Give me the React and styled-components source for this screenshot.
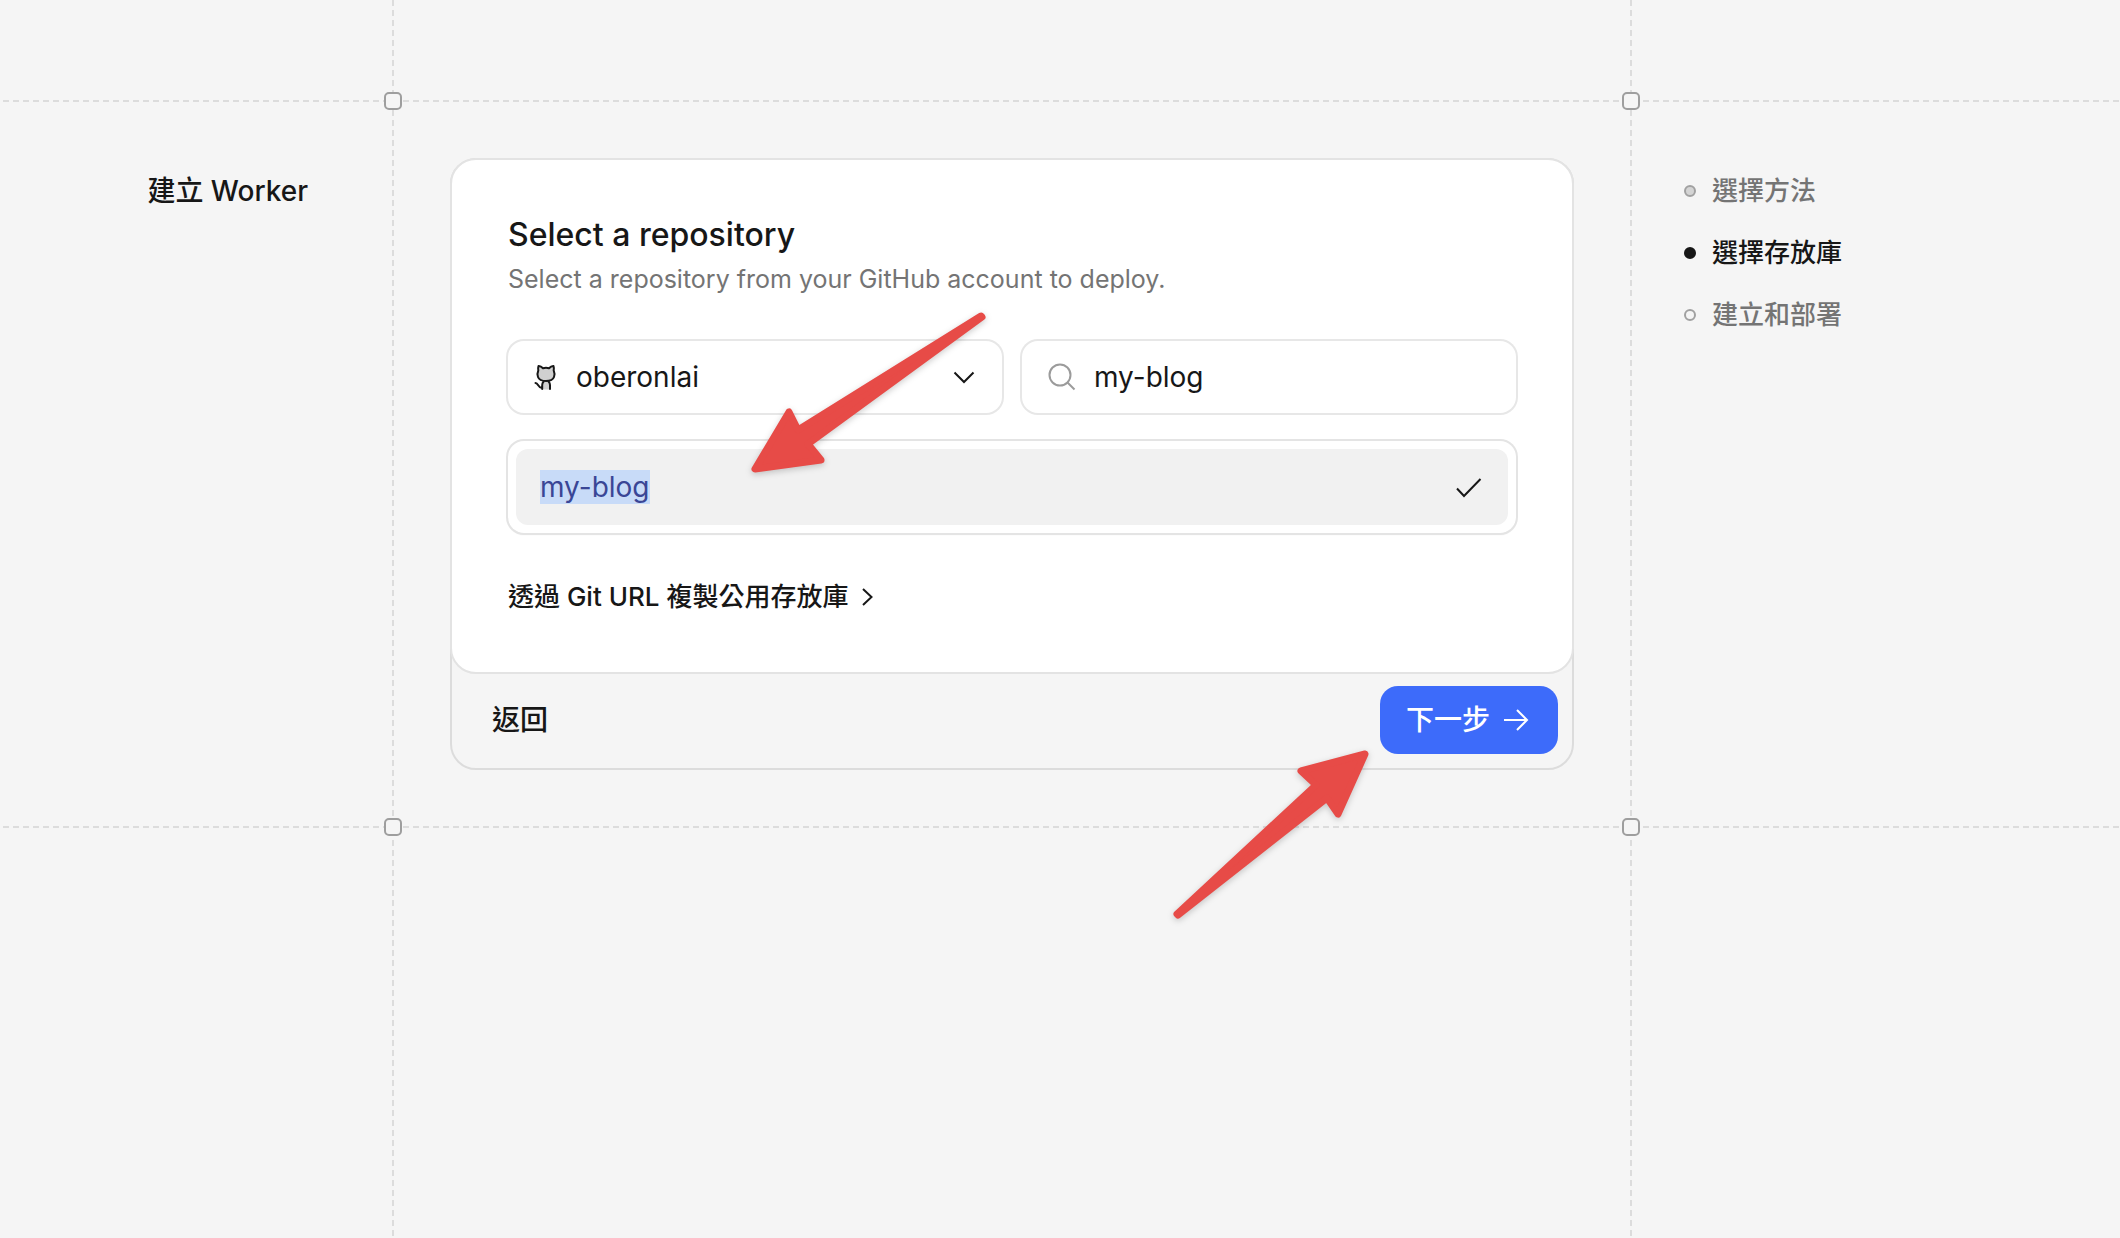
import * as React from "react"
import styled, { createGlobalStyle } from "styled-components"

const GlobalStyle = createGlobalStyle`
  * {
    box-sizing: border-box;
  }

  body {
    margin: 0;
    background-color: #f5f5f5;
    color: #171717;
    font-family: Inter, "Noto Sans CJK TC", sans-serif;
    font-size: 28px;
    line-height: 34px;
  }

  button, input, select {
    font: inherit;
    color: inherit;
  }
`

const Page = styled.div`
  position: relative;
  display: grid;
  grid-template-columns: 394px minmax(0, 1fr) 490px;
  grid-template-rows: 102px auto 1fr;
  min-height: 100vh;
  overflow: hidden;
`

const GuideColumn = styled.div`
  grid-row: 1 / -1;
  grid-column: ${({ $end }) => ($end ? 3 : 1)};
  justify-self: ${({ $end }) => ($end ? "start" : "end")};
  width: 2px;
  background: repeating-linear-gradient(to bottom, #dcdcdc 0 6px, transparent 6px 10px);
`

const GuideRow = styled.div`
  position: relative;
  grid-column: 1 / -1;
  grid-row: ${({ $end }) => ($end ? 3 : 1)};
  align-self: ${({ $end }) => ($end ? "start" : "end")};
  height: 2px;
  background: repeating-linear-gradient(to right, #dcdcdc 0 6px, transparent 6px 10px) 3px 0;
`

const Handle = styled.span`
  position: absolute;
  top: -8px;
  ${({ $side }) => ($side === "left" ? "left: 384px" : "right: 480px")};
  width: 18px;
  height: 18px;
  border: 2px solid #9e9e9e;
  border-radius: 5px;
  background-color: #f5f5f5;
`

const Aside = styled.aside`
  grid-row: 2;
  grid-column: 1;
  padding: 70px 86px;
  text-align: right;
`

const PageTitle = styled.h1`
  margin: 0;
  font-size: 28px;
  font-weight: 500;
  line-height: 38px;
`

const Main = styled.main`
  grid-row: 2;
  grid-column: 2;
  padding: 56px;
`

const Panel = styled.form`
  border: 2px solid #dcdcdc;
  border-radius: 26px;
`

const Card = styled.section`
  margin: -2px;
  padding: 56px;
  border: 2px solid #e3e3e3;
  border-radius: 26px;
  background-color: #fff;
`

const Title = styled.h2`
  margin: 0;
  font-size: 32px;
  font-weight: 500;
  line-height: 38px;
`

const Subtitle = styled.p`
  margin: 6px 0 0;
  color: #747474;
  font-size: 25px;
  line-height: 38px;
`

const Fields = styled.div`
  display: grid;
  grid-template-columns: repeat(2, minmax(0, 1fr));
  gap: 20px;
  margin-top: 43px;
`

const Field = styled.label`
  display: flex;
  align-items: center;
  gap: 18px;
  height: 72px;
  padding: 0 26px;
  border-radius: 16px;
  background-color: #fff;
  box-shadow: 0 0 0 2px #e7e7e7;
`

const Select = styled.select`
  flex: 1;
  min-width: 0;
  padding: 0;
  border: 0;
  outline: 0;
  appearance: none;
  background: none;
`

const SearchInput = styled.input`
  flex: 1;
  min-width: 0;
  padding: 0;
  border: 0;
  outline: 0;
  background: none;
`

const RepoList = styled.ul`
  margin: 28px 0 0;
  padding: 8px;
  border-radius: 16px;
  list-style: none;
  box-shadow: 0 0 0 2px #e4e4e4, 0 2px 2px rgba(0, 0, 0, 0.06);
`

const RepoButton = styled.button`
  display: flex;
  align-items: center;
  justify-content: space-between;
  width: 100%;
  height: 76px;
  padding: 0 24px;
  border: 0;
  border-radius: 12px;
  background-color: #f1f1f1;
`

const Selected = styled.mark`
  background-color: #c8dbf8;
  color: #3a4696;
`

const CloneLink = styled.a`
  display: flex;
  align-items: center;
  gap: 12px;
  width: fit-content;
  margin-top: 45px;
  color: inherit;
  font-size: 26px;
  font-weight: 500;
  line-height: 38px;
  text-decoration: none;
`

const Footer = styled.footer`
  display: flex;
  align-items: center;
  justify-content: space-between;
  padding: 14px;
`

const BackButton = styled.button`
  height: 68px;
  padding: 0 26px;
  border: 0;
  background: none;
  font-weight: 500;
`

const NextButton = styled.button`
  display: flex;
  align-items: center;
  gap: 14px;
  height: 68px;
  padding: 0 26px;
  border: 0;
  border-radius: 18px;
  background-color: #3d6bfa;
  color: #fff;
  font-weight: 500;
`

const Steps = styled.ol`
  grid-row: 2;
  grid-column: 3;
  display: flex;
  flex-direction: column;
  gap: 24px;
  margin: 0;
  padding: 70px 54px;
  list-style: none;
`

const Step = styled.li`
  display: flex;
  align-items: center;
  gap: 16px;
  color: ${({ $active }) => ($active ? "#171717" : "#747474")};
  font-size: 26px;
  font-weight: 500;
  line-height: 38px;
`

const dots = {
  done: { fill: "#d4d4d4", line: "#a1a1a1" },
  active: { fill: "#171717", line: "#171717" },
  todo: { fill: "transparent", line: "#a1a1a1" },
}

const Dot = styled.span`
  width: 12px;
  height: 12px;
  border: 2px solid ${({ $state }) => dots[$state].line};
  border-radius: 50%;
  background-color: ${({ $state }) => dots[$state].fill};
`

const Icon = styled.svg`
  flex: none;
  fill: none;
  stroke: currentColor;
  stroke-width: 2;
`

const Arrow = styled.svg`
  position: absolute;
  top: ${({ $top }) => $top}px;
  left: ${({ $left }) => $left}px;
  overflow: visible;
  fill: #e74b47;
  stroke: #e74b47;
  stroke-width: 7;
  stroke-linejoin: round;
  filter: drop-shadow(0 2px 3px rgba(0, 0, 0, 0.2));
  pointer-events: none;
`

const OctocatIcon = () => (
  <Icon width="24" height="28" viewBox="1 0 24 28" strokeLinejoin="round" strokeLinecap="round">
    <path fill="#d0d0d0" stroke="none" d="M9.500 17h7.500v9.500h-7.500z" />
    <path
      fill="#d0d0d0"
      d="M5.500 3c1.800-.2 3.200.9 4.500 2.300 2-.6 4-.6 6 0 1.300-1.400 2.700-2.500 4.500-2.300.5 1.500.5 3 .2 4.500.9 2 1 4.500.3 6.500-.9 2.500-2.800 4-8 4s-7.100-1.500-8-4c-.7-2-.6-4.500.3-6.500-.3-1.500-.3-3 .2-4.500z"
    />
    <path d="M9.200 26v-4c0-1.500.5-2.500 1.500-3.500M17 26v-4c0-1.500-.5-2.500-1.500-3.500M2.500 20c3 0 2.500 5 6.500 5" />
  </Icon>
)

const ChevronDownIcon = () => (
  <Icon width="24" height="24" viewBox="0 0 24 24">
    <path d="M2.500 7.500 12 17l9.500-9.500" />
  </Icon>
)

const SearchIcon = () => (
  <Icon width="28" height="28" viewBox="0 0 28 28" color="#9b9b9b">
    <circle cx="12" cy="12" r="10.500" />
    <path d="m19.500 19.500 7 7" />
  </Icon>
)

const CheckIcon = () => (
  <Icon width="28" height="28" viewBox="0 0 28 28">
    <path d="M1 15.500 8 23 24.500 6" />
  </Icon>
)

const ChevronRightIcon = () => (
  <Icon width="14" height="20" viewBox="0 0 14 20">
    <path d="m3 2 8.500 8L3 18" />
  </Icon>
)

const ArrowRightIcon = () => (
  <Icon width="28" height="28" viewBox="0 0 28 28">
    <path d="M0 14h23M13 4l10 10-10 10" />
  </Icon>
)

const steps = [
  { label: "選擇方法", state: "done" },
  { label: "選擇存放庫", state: "active" },
  { label: "建立和部署", state: "todo" },
]

export default function App() {
  const [account, setAccount] = React.useState("oberonlai")
  const [query, setQuery] = React.useState("my-blog")

  return (
    <>
      <GlobalStyle />
      <Page>
        <GuideColumn />
        <GuideColumn $end />
        <GuideRow>
          <Handle $side="left" />
          <Handle $side="right" />
        </GuideRow>
        <GuideRow $end>
          <Handle $side="left" />
          <Handle $side="right" />
        </GuideRow>

        <Aside>
          <PageTitle>建立 Worker</PageTitle>
        </Aside>

        <Main>
          <Panel onSubmit={(e) => e.preventDefault()}>
            <Card>
              <Title>Select a repository</Title>
              <Subtitle>Select a repository from your GitHub account to deploy.</Subtitle>

              <Fields>
                <Field>
                  <OctocatIcon />
                  <Select aria-label="GitHub account" value={account} onChange={(e) => setAccount(e.target.value)}>
                    <option value="oberonlai">oberonlai</option>
                  </Select>
                  <ChevronDownIcon />
                </Field>
                <Field>
                  <SearchIcon />
                  <SearchInput
                    type="text"
                    aria-label="Search repositories"
                    value={query}
                    onChange={(e) => setQuery(e.target.value)}
                  />
                </Field>
              </Fields>

              <RepoList>
                <li>
                  <RepoButton type="button" aria-pressed="true">
                    <Selected>my-blog</Selected>
                    <CheckIcon />
                  </RepoButton>
                </li>
              </RepoList>

              <CloneLink href="#clone">
                透過 Git URL 複製公用存放庫
                <ChevronRightIcon />
              </CloneLink>
            </Card>

            <Footer>
              <BackButton type="button">返回</BackButton>
              <NextButton type="submit">
                下一步
                <ArrowRightIcon />
              </NextButton>
            </Footer>
          </Panel>
        </Main>

        <Steps>
          {steps.map(({ label, state }) => (
            <Step key={label} $active={state === "active"}>
              <Dot $state={state} />
              {label}
            </Step>
          ))}
        </Steps>

        <Arrow $left={750} $top={310} width="236" height="166" viewBox="0 0 236 166">
          <path d="M231 6 48 120 39 102 5 159 71 150 58 134 232 7Z" />
        </Arrow>
        <Arrow $left={1172} $top={748} width="200" height="172" viewBox="0 0 200 172">
          <path d="M5 166 144 37 129 23 193 6 166 66 155 50 6 167Z" />
        </Arrow>
      </Page>
    </>
  )
}
